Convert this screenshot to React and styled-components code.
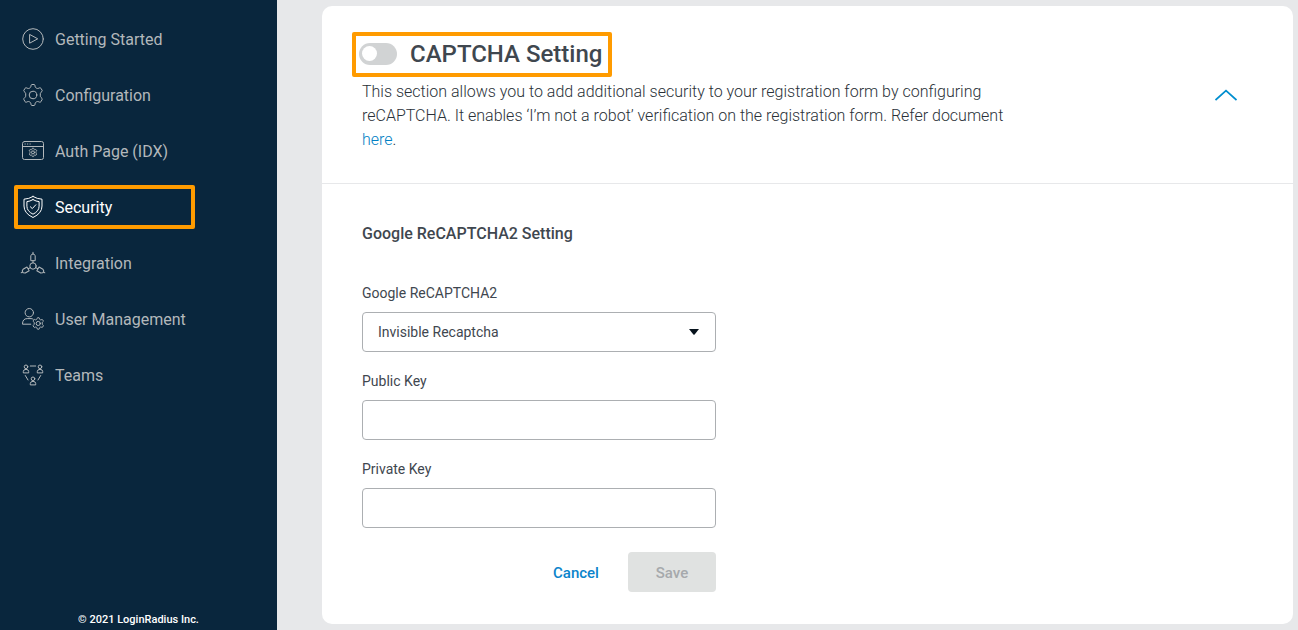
import React from "react";
import styled, { createGlobalStyle } from "styled-components";

const GlobalStyle = createGlobalStyle`
  *, *::before, *::after { box-sizing: border-box; }
  body {
    margin: 0;
    background: #e7e8ea;
    color: #3f474f;
    font-family: Roboto, "Liberation Sans", sans-serif;
    font-size: 16px;
  }
  button, input, select { font: inherit; color: inherit; }
`;

const Page = styled.div`
  display: grid;
  grid-template-columns: 277px minmax(0, 1fr);
  min-height: 100vh;
`;

const Sidebar = styled.aside`
  display: flex;
  flex-direction: column;
  justify-content: space-between;
  padding: 17px 14px 2px;
  background: #09263d;
`;

const NavList = styled.ul`
  display: flex;
  flex-direction: column;
  gap: 12px;
  margin: 0;
  padding: 0;
  list-style: none;
`;

const NavLink = styled.a`
  display: flex;
  align-items: center;
  gap: 11px;
  width: 181px;
  height: 44px;
  padding: 0 4px;
  border: 4px solid ${(p) => (p.$active ? "#ff9b00" : "transparent")};
  border-radius: 2px;
  color: ${(p) => (p.$active ? "#ffffff" : "#b3b8bb")};
  line-height: 24px;
  text-decoration: none;
  white-space: nowrap;
`;

const NavLabel = styled.span`
  padding-top: 2px;
`;

const NavIcon = styled.svg`
  flex: none;
  width: 22px;
  height: 22px;
  overflow: visible;
  fill: none;
  stroke: currentColor;
  stroke-width: 1;
  stroke-linecap: round;
  stroke-linejoin: round;
`;

const Copyright = styled.small`
  color: #ffffff;
  font-size: 11px;
  font-weight: 500;
  line-height: 16px;
  text-align: center;
`;

const Main = styled.main`
  padding: 6px 5px 6px 45px;
`;

const Card = styled.section`
  border-radius: 10px;
  background: #ffffff;
`;

const CardHeader = styled.header`
  display: flex;
  align-items: center;
  justify-content: space-between;
  padding: 26px 56px 26px 30px;
  border-bottom: 1px solid #e7e8ea;
`;

const TitleBox = styled.label`
  display: flex;
  align-items: center;
  gap: 13px;
  width: 260px;
  height: 45px;
  padding: 0 3px 2px;
  border: 4px solid #ff9b00;
  border-radius: 2px;
`;

const Toggle = styled.input`
  appearance: none;
  flex: none;
  display: flex;
  align-items: center;
  width: 38px;
  height: 22px;
  margin: 0;
  padding: 0 3px;
  border-radius: 11px;
  background: #d1d3d4;
  &::before {
    content: "";
    width: 15px;
    height: 15px;
    border-radius: 50%;
    background: #ffffff;
  }
  &:checked {
    justify-content: flex-end;
    background: #008ecf;
  }
`;

const Title = styled.h1`
  margin: 0;
  font-size: 24px;
  font-weight: 500;
  line-height: 32px;
  white-space: nowrap;
`;

const Description = styled.p`
  max-width: 680px;
  margin: 3px 0 0;
  padding: 0 0 5px 10px;
  color: #2a3138;
  line-height: 24px;
  font-weight: 300;
`;

const TextLink = styled.a`
  color: #0080c4;
  text-decoration: none;
`;

const CollapseButton = styled.button`
  display: flex;
  padding: 0;
  border: 0;
  background: none;
  color: #008ecf;
`;

const Form = styled.form`
  display: flex;
  flex-direction: column;
  gap: 16px;
  max-width: 434px;
  padding: 36px 40px 32px;
`;

const FormTitle = styled.h2`
  margin: 0 0 18px;
  padding-top: 2px;
  font-size: 16px;
  font-weight: 500;
  line-height: 24px;
`;

const Field = styled.div`
  display: flex;
  flex-direction: column;
  gap: 7px;
`;

const FieldLabel = styled.label`
  padding-top: 1px;
  font-size: 14px;
  line-height: 24px;
`;

const TextInput = styled.input`
  width: 100%;
  height: 40px;
  padding: 0 15px;
  border: 1px solid #acafb2;
  border-radius: 4px;
  background: #ffffff;
  font-size: 14px;
`;

const SelectWrap = styled.div`
  display: grid;
  align-items: center;
  > * { grid-area: 1 / 1; }
`;

const Select = styled.select`
  appearance: none;
  width: 100%;
  height: 40px;
  padding: 0 40px 0 15px;
  border: 1px solid #acafb2;
  border-radius: 4px;
  background: #ffffff;
  font-size: 14px;
`;

const Caret = styled.svg`
  justify-self: end;
  margin-right: 17px;
  fill: #07131d;
  pointer-events: none;
`;

const Actions = styled.div`
  display: flex;
  justify-content: flex-end;
  gap: 8px;
  margin-top: 8px;
`;

const Button = styled.button`
  min-width: 88px;
  height: 40px;
  padding: 2px 21px 0;
  border: 0;
  border-radius: 4px;
  background: ${(p) => (p.$filled ? "#e0e2e1" : "transparent")};
  color: ${(p) => (p.$filled ? "#a6a9ac" : "#0a84cb")};
  font-size: 15px;
  font-weight: 500;
`;

const GEAR =
  "M9.1 1.2Q9.3.5 10 .5H12Q12.7.5 12.9 1.2L13.2 2.8Q13.4 3.5 14.1 3.9L14.8 4.3Q15.5 4.6 16.2 4.4L17.7 3.8Q18.4 3.5 18.8 4.2L20.1 6.2Q20.5 6.9 20 7.4L18.9 8.4Q18.3 8.9 18.3 9.7V11.9Q18.3 12.8 18.9 13.3L20 14.4Q20.5 14.9 20.1 15.6L18.8 17.8Q18.4 18.5 17.7 18.2L16.2 17.6Q15.5 17.4 14.8 17.7L14.1 18.1Q13.4 18.5 13.2 19.2L12.9 20.8Q12.7 21.5 12 21.5H10Q9.3 21.5 9.1 20.8L8.8 19.2Q8.6 18.5 7.9 18.1L7.2 17.7Q6.5 17.4 5.8 17.6L4.3 18.2Q3.6 18.5 3.2 17.8L1.9 15.6Q1.5 14.9 2 14.4L3.1 13.3Q3.7 12.8 3.7 11.9V9.7Q3.7 8.9 3.1 8.4L2 7.4Q1.5 6.9 1.9 6.2L3.2 4.2Q3.6 3.5 4.3 3.8L5.8 4.4Q6.5 4.6 7.2 4.3L7.9 3.9Q8.6 3.5 8.8 2.8Z";

const Gear = ({ x, y, scale }) => (
  <g transform={`translate(${x} ${y}) scale(${scale})`}>
    <path d={GEAR} vectorEffect="non-scaling-stroke" />
    <circle cx="11" cy="11" r="3.8" vectorEffect="non-scaling-stroke" />
  </g>
);

const Connector = ({ angle }) => (
  <g transform={`rotate(${angle} 11 14)`}>
    <path d="M11 10.8V8.5M8.8 8.3V3.8L10 2.1H12L13.2 3.8V8.3ZM11 2V.3" />
  </g>
);

const Person = ({ x, y }) => (
  <g transform={`translate(${x} ${y})`}>
    <circle cx="3" cy="2.3" r="1.8" />
    <path d="M.3 8V7Q.3 4.9 3 4.9T5.7 7V8Z" />
  </g>
);

const icons = {
  start: (
    <>
      <circle cx="11" cy="11" r="10.3" />
      <path d="M7.6 6.8V15.2L15.4 11Z" />
    </>
  ),
  gear: <Gear x={0} y={0} scale={1} />,
  page: (
    <>
      <rect x=".5" y="1.5" width="21" height="18" rx="2" />
      <path d="M.5 6.5H21.5M3 4H3.3M5.5 4H5.8M8 4H8.3" />
      <Gear x={6.6} y={8} scale={0.4} />
    </>
  ),
  shield: (
    <>
      <path d="M11 .5Q15.2 3 20 3.2V10Q20 17.3 11 21.5Q2 17.3 2 10V3.2Q6.8 3 11 .5Z" />
      <path d="M11 3.6Q14.2 5.5 17.1 5.6V10.2Q17.1 15.2 11 18.2Q4.9 15.2 4.9 10.2V5.6Q7.8 5.5 11 3.6Z" />
      <path d="M8.4 10.8L10.3 12.6L13.8 8.8" />
    </>
  ),
  integration: (
    <>
      <circle cx="11" cy="14" r="3.2" />
      <Connector angle={0} />
      <Connector angle={120} />
      <Connector angle={240} />
    </>
  ),
  users: (
    <>
      <circle cx="7.3" cy="4.7" r="4.2" />
      <path d="M8.8 16.2H.5Q.5 10.6 5.2 10.6H9Q10.4 10.6 11.2 11.2" />
      <Gear x={10.2} y={9.4} scale={0.55} />
    </>
  ),
  teams: (
    <>
      <Person x={1} y={0.5} />
      <Person x={15} y={0.5} />
      <Person x={8} y={12.5} />
      <path d="M8.3 2H13.7M3.3 11.5L6 16M18.7 11.5L16 16" />
    </>
  ),
};

const navItems = [
  { label: "Getting Started", icon: "start" },
  { label: "Configuration", icon: "gear" },
  { label: "Auth Page (IDX)", icon: "page" },
  { label: "Security", icon: "shield", active: true },
  { label: "Integration", icon: "integration" },
  { label: "User Management", icon: "users" },
  { label: "Teams", icon: "teams" },
];

export default function App() {
  return (
    <>
      <GlobalStyle />
      <Page>
        <Sidebar>
          <nav aria-label="Main">
            <NavList>
              {navItems.map((item) => (
                <li key={item.label}>
                  <NavLink
                    href="#"
                    $active={item.active}
                    aria-current={item.active ? "page" : undefined}
                  >
                    <NavIcon viewBox="0 0 22 22" aria-hidden="true">
                      {icons[item.icon]}
                    </NavIcon>
                    <NavLabel>{item.label}</NavLabel>
                  </NavLink>
                </li>
              ))}
            </NavList>
          </nav>
          <Copyright>© 2021 LoginRadius Inc.</Copyright>
        </Sidebar>
        <Main>
          <Card>
            <CardHeader>
              <div>
                <TitleBox>
                  <Toggle type="checkbox" role="switch" />
                  <Title>CAPTCHA Setting</Title>
                </TitleBox>
                <Description>
                  This section allows you to add additional security to your
                  registration form by configuring
                  <br />
                  reCAPTCHA. It enables ‘I’m not a robot’ verification on the
                  registration form. Refer document
                  <br />
                  <TextLink href="#">here</TextLink>.
                </Description>
              </div>
              <CollapseButton type="button" aria-label="Collapse section">
                <svg
                  width="22"
                  height="12"
                  viewBox="0 0 22 12"
                  fill="none"
                  stroke="currentColor"
                  strokeWidth="1.7"
                >
                  <path d="M.5 11L11 1.7L21.5 11" />
                </svg>
              </CollapseButton>
            </CardHeader>
            <Form>
              <FormTitle>Google ReCAPTCHA2 Setting</FormTitle>
              <Field>
                <FieldLabel htmlFor="captcha-type">Google ReCAPTCHA2</FieldLabel>
                <SelectWrap>
                  <Select id="captcha-type">
                    <option>Invisible Recaptcha</option>
                  </Select>
                  <Caret width="10" height="6" viewBox="0 0 10 6" aria-hidden="true">
                    <path d="M0 0H10L5.6 5.4Q5 6 4.4 5.4Z" />
                  </Caret>
                </SelectWrap>
              </Field>
              <Field>
                <FieldLabel htmlFor="public-key">Public Key</FieldLabel>
                <TextInput id="public-key" type="text" />
              </Field>
              <Field>
                <FieldLabel htmlFor="private-key">Private Key</FieldLabel>
                <TextInput id="private-key" type="text" />
              </Field>
              <Actions>
                <Button type="button">Cancel</Button>
                <Button type="submit" $filled disabled>
                  Save
                </Button>
              </Actions>
            </Form>
          </Card>
        </Main>
      </Page>
    </>
  );
}
